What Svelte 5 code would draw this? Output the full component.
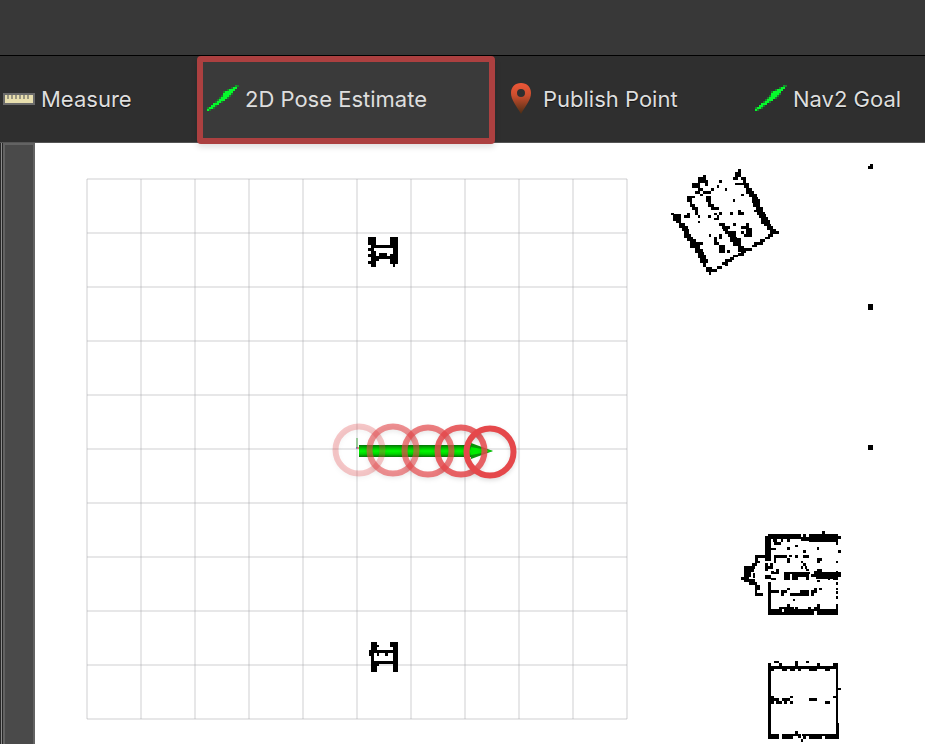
<script>
  const arrowCells = [
    [14, 0, 1], [13, 1, 2], [11, 2, 3], [9, 3, 4], [8, 4, 4], [8, 5, 3], [7, 6, 3],
    [6, 7, 3], [5, 8, 2], [3, 9, 3], [2, 10, 2], [1, 11, 2], [0, 12, 1]
  ];
  const arrowEdges = [[15, 0], [12, 1], [10, 2], [8, 3], [12, 4], [7, 5], [11, 5], [6, 6], [10, 6], [5, 7], [4, 8], [7, 8], [4, 10], [0, 11], [3, 11], [1, 12]];

  // Occupied map areas; each entry is x y width height in thirds of a pixel.
  const obstacles = [
    { x: 660, y: 155, cells: `129 60 9 7,114 67 24 8,114 75 30 9,97 84 24 14,135 84 9 8,113 98 16 10,105 108 16 9,129 108 24 8,153 99 8 9,171 90 7 8,177 75 9 9,195 99 6 9,121 117 8 6,89 123 16 7,81 124 16 16,89 140 8 8,89 148 16 8,97 156 16 9,105 165 8 14,113 180 6 9,113 198 7 6,137 123 16 17,144 140 9 8,144 148 17 8,153 156 24 9,219 132 6 9,243 117 9 6,
      234 43 9 8,226 51 18 15,219 66 15 9,242 66 16 9,248 75 10 9,225 84 33 6,251 84 16 16,259 100 16 16,267 108 16 14,267 116 24 9,275 125 18 8,275 132 24 12,279 144 21 12,288 156 20 9,282 165 26 6,291 171 24 9,297 177 21 12,304 186 20 20,307 195 24 13,312 206 20 8,321 212 18 12,329 222 18 10,331 229 26 8,
      325 237 14 8,315 245 16 8,299 252 17 9,283 260 25 9,275 269 16 8,251 280 24 8,243 286 16 9,234 294 17 8,219 300 16 6,210 306 12 8,195 312 20 8,186 320 15 10,195 322 8 10,171 333 15 9,162 342 9 8,145 343 25 8,147 351 7 9,137 335 18 16,
      33 174 9 6,40 177 22 20,49 197 15 7,57 204 17 16,65 213 18 16,73 222 15 14,73 236 20 12,81 245 18 14,89 253 18 16,105 261 24 10,89 269 24 10,105 270 16 12,105 282 24 12,113 290 20 18,121 300 18 18,121 311 24 14,129 325 8 10,
      73 180 16 8,81 175 8 5,144 180 9 9,162 174 8 6,178 171 8 9,170 180 7 10,162 189 14 7,210 171 9 9,234 165 9 15,243 171 8 9,178 204 16 9,219 204 9 9,186 213 23 9,189 222 14 7,195 229 32 9,204 237 24 8,210 245 20 8,210 253 20 8,218 258 24 16,226 250 16 16,234 266 9 20,234 274 19 16,147 237 6 9,177 237 9 14,162 246 9 16,162 262 14 8,177 270 18 23,201 285 9 9,259 204 8 9,251 213 16 8,243 213 8 9,259 219 17 26,243 228 8 9,251 237 24 8` },
    { x: 730, y: 520, cells: `276 33 9 9,114 42 99 15,105 48 18 75,219 42 9 8,213 50 24 12,237 42 87 24,324 48 9 9,129 57 12 9,133 66 20 9,153 57 6 9,171 57 9 9,318 66 6 8,195 75 9 6,123 84 15 6,171 81 9 9,261 81 6 9,219 90 9 9,324 90 9 9,75 105 48 8,75 113 8 16,81 123 9 6,65 129 16 9,42 138 34 10,42 148 22 24,64 148 8 9,70 158 6 15,33 171 24 8,42 178 34 8,57 186 19 8,75 186 6 41,75 204 15 7,75 219 24 8,81 195 9 8,
      132 105 39 8,132 113 6 16,178 105 9 7,195 105 9 8,219 105 18 8,171 114 9 14,261 114 15 9,261 123 9 6,213 123 6 6,219 129 9 9,213 138 6 10,225 138 6 8,228 146 9 7,318 123 6 6,105 129 9 24,114 138 16 9,121 129 9 10,138 147 8 8,133 155 13 8,123 153 8 10,105 165 18 12,123 173 15 6,113 186 9 99,162 156 18 23,180 156 60 6,186 162 18 18,204 162 33 8,228 170 9 9,243 162 90 8,252 154 20 8,261 147 15 9,273 156 60 6,258 170 66 6,261 179 9 7,294 171 6 8,309 171 15 9,318 153 6 10,318 186 6 9,318 204 6 6,318 213 6 8,318 228 6 8,318 252 6 9,
      121 210 26 9,153 210 18 9,153 219 10 9,171 204 9 6,180 219 33 8,210 210 27 18,243 210 9 17,252 204 9 14,267 204 9 6,189 237 6 6,114 267 42 18,147 261 24 6,171 252 9 10,162 267 90 18,171 261 20 8,195 261 9 6,234 261 9 6,252 261 18 12,261 252 9 10,261 267 63 18,318 261 6 6,156 276 6 9` },
    { x: 750, y: 645, cells: `72 48 15 6,87 54 9 9,54 54 9 228,135 48 8 16,168 48 9 6,201 54 9 10,249 54 15 9,54 63 210 9,63 72 9 6,96 72 15 6,120 72 15 6,144 72 9 5,177 72 24 6,225 72 15 6,258 63 6 171,264 129 9 6,249 153 9 6,63 153 9 24,72 159 15 9,78 168 18 9,96 159 24 8,102 168 9 9,120 153 9 6,120 168 9 9,177 159 24 9,225 168 15 9,258 234 9 48,54 267 33 15,96 267 33 15,129 267 25 6,135 258 9 15,144 273 9 6,153 282 6 9,159 273 9 9,156 267 105 6,177 267 39 15,225 267 42 15` },
    { x: 350, y: 220, cells: `54 51 24 24,120 51 24 24,63 75 81 9,63 84 9 9,54 84 9 9,63 93 15 15,54 102 9 9,129 84 15 48,87 99 24 9,120 102 9 9,63 108 81 9,63 117 24 6,63 120 15 20,54 123 9 8,120 117 24 15,129 132 6 9` },
    { x: 350, y: 630, cells: `63 36 18 24,81 45 6 6,120 36 24 15,129 45 15 81,63 60 81 9,57 60 15 17,81 69 6 8,105 69 9 9,63 77 9 49,63 93 81 9,63 102 18 24,81 102 6 6` },
    { x: 868, y: 164, cells: `6 0 9 15,0 6 9 9` },
    { x: 868, y: 304, cells: `0 0 15 17` },
    { x: 868, y: 445, cells: `0 0 15 15` }
  ];

  const toPath = (cells) =>
    cells.split(',').map((c) => {
      const [x, y, w, h] = c.trim().split(/\s+/).map(Number);
      return `M${x} ${y}h${w}v${h}h${-w}z`;
    }).join('');

  const steps = Array.from({ length: 11 }, (_, i) => i * 54);

  const trail = [
    { x: 359, y: 450, o: 0.3 },
    { x: 393, y: 450, o: 0.6 },
    { x: 428, y: 451, o: 0.7 },
    { x: 461, y: 451, o: 0.85 },
    { x: 490, y: 452, o: 1 }
  ];

  let active = $state('pose');
</script>

{#snippet arrow()}
  <svg class="icon" viewBox="0 0 32 32" shape-rendering="crispEdges" aria-hidden="true">
    {#each arrowEdges as [x, y]}
      <rect x={x * 2} y={y * 2 + 2} width="2" height="2" fill="#1c7d2c" />
    {/each}
    {#each arrowCells as [x, y, w]}
      <rect x={x * 2} y={y * 2 + 2} width={w * 2} height="2" fill={y === 0 ? '#149a2b' : '#05f82b'} />
    {/each}
  </svg>
{/snippet}

<div class="app">
  <header class="titlebar"></header>
  <nav class="toolbar" aria-label="Tools">
    <button class="tool measure" onclick={() => (active = 'measure')}>
      <svg class="icon" viewBox="0 0 32 32" shape-rendering="crispEdges" aria-hidden="true">
        <rect y="10" width="32" height="12" fill="#6b6b6b" />
        <path d="M2 12h28v8H2z" fill="#e8dfae" />
        <path d="M4 12h2v4H4zM8 12h2v4H8zM12 12h2v4h-2zM16 12h2v4h-2zM20 12h2v4h-2zM24 12h2v4h-2z" fill="#999580" />
      </svg>
      <span>Measure</span>
    </button>
    <button class="tool pose" aria-pressed={active === 'pose'} onclick={() => (active = 'pose')}>
      {@render arrow()}
      <span>2D Pose Estimate</span>
    </button>
    <button class="tool publish" onclick={() => (active = 'publish')}>
      <svg class="icon" viewBox="0 0 32 32" aria-hidden="true">
        <defs>
          <linearGradient id="pin" x1="0" y1="0" x2="0" y2="1">
            <stop offset="0" stop-color="#ee5738" />
            <stop offset=".4" stop-color="#cb4e2e" />
            <stop offset="1" stop-color="#4b2d14" />
          </linearGradient>
        </defs>
        <path d="M16 0C10 0 6 4 6 10c0 7 5 12 10 21 5-9 10-14 10-21 0-6-4-10-10-10zm0 6a4 4 0 1 1 0 8 4 4 0 0 1 0-8z" fill="url(#pin)" fill-rule="evenodd" />
      </svg>
      <span>Publish Point</span>
    </button>
    <button class="tool goal" onclick={() => (active = 'goal')}>
      {@render arrow()}
      <span>Nav2 Goal</span>
    </button>
  </nav>

  <div class="workspace">
    <aside class="dock"><div class="scroll"></div><div class="panel"></div></aside>
    <main class="view">
      <svg class="scene" viewBox="35 143 890 601" preserveAspectRatio="xMinYMin slice" role="img" aria-label="Map view">
        <defs>
          <linearGradient id="shaft" x1="0" y1="0" x2="0" y2="1">
            <stop offset="0" stop-color="#087008" />
            <stop offset=".2" stop-color="#00b300" />
            <stop offset=".5" stop-color="#00fa00" />
            <stop offset=".75" stop-color="#00d400" />
            <stop offset="1" stop-color="#087008" />
          </linearGradient>
        </defs>
        <g stroke="#a0a0a4" stroke-opacity=".5" fill="none">
          {#each steps as s}
            <path d={`M${87 + s} 179V719M87 ${179 + s}H627`} />
          {/each}
        </g>
        {#each obstacles as o}
          <path d={toPath(o.cells)} transform={`translate(${o.x} ${o.y}) scale(.33333)`} shape-rendering="crispEdges" />
        {/each}
        <path d="M357 438v10" stroke="#4aaa4a" />
        <path d="M357 448h3" stroke="#e02020" />
        <path d="M356 448h1" stroke="#2020e0" />
        <path d="M359 445h112v12H359z" fill="url(#shaft)" />
        <path d="M471 443l22 8-22 8z" fill="#0a980a" />
        <path d="M471 447l22 4-22 4z" fill="#00ed00" />
        <g class="trail">
          {#each trail as t}
            <circle cx={t.x} cy={t.y} r="23.5" stroke-opacity={t.o} />
          {/each}
        </g>
      </svg>
    </main>
  </div>
</div>

<style>
  :global(body) {
    margin: 0;
    background: #fff;
  }
  .app {
    display: flex;
    flex-direction: column;
    min-height: 100vh;
    overflow: hidden;
    font-family: Inter, "Liberation Sans", sans-serif;
  }
  .titlebar {
    height: 55px;
    background: #383838;
    border-bottom: 1px solid #000;
  }
  .toolbar {
    display: flex;
    height: 86px;
    background: #2f2f2f;
    border-bottom: 1px solid #555;
    position: relative;
    z-index: 1;
  }
  .tool {
    display: flex;
    align-items: center;
    gap: 6px;
    flex: none;
    box-sizing: border-box;
    height: 86px;
    margin: 0;
    padding: 0 0 0 10px;
    border: 0;
    background: transparent;
    color: #dedede;
    font: 22px/28px Inter, "Liberation Sans", sans-serif;
    white-space: nowrap;
    text-shadow: 0 1px 1px #111;
  }
  .measure {
    width: 197px;
    padding-left: 3px;
  }
  .pose {
    width: 298px;
    height: 88px;
    padding: 0 0 2px 4px;
    border: 6px solid #ac4040;
    border-radius: 4px;
    background: #3a3a3a;
    box-shadow: 0 3px 6px #0002;
    text-shadow: none;
  }
  .publish {
    width: 250px;
  }
  .icon {
    width: 32px;
    height: 32px;
    flex: none;
  }
  .workspace {
    display: flex;
    flex: 1;
  }
  .dock {
    display: flex;
    flex: none;
    width: 35px;
    background: #282828;
  }
  .scroll {
    width: 1px;
    margin: 0 1px;
    background: #8c8c8c;
  }
  .panel {
    flex: 1;
    background: #4a4a4a;
    border: solid #636363;
    border-width: 2px 2px 0;
  }
  .view {
    flex: 1;
    position: relative;
    background: #fff;
  }
  .scene {
    position: absolute;
    width: 100%;
    height: 100%;
  }
  .trail circle {
    fill: none;
    stroke: #e5484b;
    stroke-width: 6;
    filter: drop-shadow(0 2px 2px #0002);
  }
</style>
